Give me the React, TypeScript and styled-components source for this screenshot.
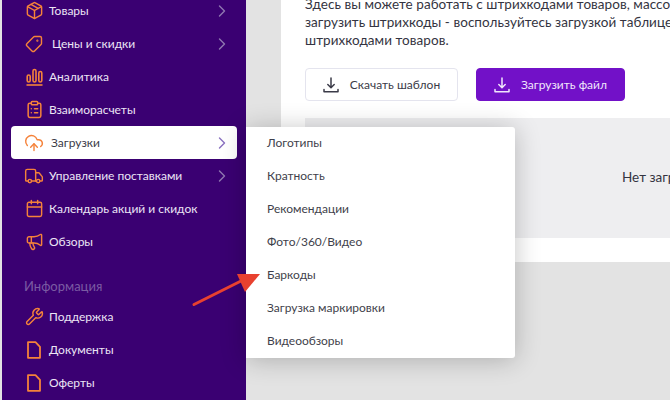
import React from 'react'
import styled, { createGlobalStyle } from 'styled-components'
import { Package, Tag, ClipboardList, CloudUpload, Truck, Calendar, Megaphone, Wrench, ChevronRight } from 'lucide-react'

const GlobalStyle = createGlobalStyle`
  html, body { margin: 0; padding: 0; background: #e3e3e3; }
  body { font-family: Lato, "Noto Sans", sans-serif; }
`

const Page = styled.div`
  position: relative;
  width: 670px;
  height: 400px;
  overflow: hidden;
  display: flex;
  padding-left: 2px;
  box-sizing: border-box;
  background: #e3e3e3;
`

const Sidebar = styled.nav`
  width: 244px;
  flex-shrink: 0;
  background: #3a0072;
  padding: 0 9px;
  box-sizing: border-box;
`

const NavList = styled.div`
  margin-top: -6px;
`

const NavItem = styled.div<{ $active?: boolean }>`
  height: 33px;
  display: flex;
  align-items: center;
  padding: 0 5px 0 12px;
  border-radius: 4px;
  font-size: 12px;
  color: ${p => (p.$active ? '#3b3b48' : '#ece5f5')};
  background: ${p => (p.$active ? '#ffffff' : 'transparent')};
  box-sizing: border-box;
`

const IconSlot = styled.span`
  width: 22px;
  display: flex;
  justify-content: center;
  color: #f5823a;
  flex-shrink: 0;
`

const NavLabel = styled.span<{ $shift?: number }>`
  margin-left: ${p => p.$shift ?? 4}px;
  flex: 1;
  white-space: nowrap;
`

const Chevron = styled(ChevronRight)<{ $active?: boolean }>`
  color: ${p => (p.$active ? '#8a72c0' : '#8e75b0')};
`

const SectionTitle = styled.div`
  font-size: 13px;
  color: #7a5ba3;
  height: 28px;
  margin-top: 14px;
  padding-left: 13px;
  display: flex;
  align-items: center;
`

const Main = styled.main`
  flex: 1;
  min-width: 0;
  padding-left: 35px;
  overflow: hidden;
`

const Panel = styled.section`
  background: #fff;
  padding: 0 0 24px 24px;
  margin-top: -5px;
  color: #343441;
`

const Intro = styled.p`
  margin: 0;
  font-size: 13.5px;
  line-height: 18px;
  white-space: nowrap;
  letter-spacing: 0.05px;
`

const Actions = styled.div`
  display: flex;
  gap: 18px;
  margin-top: 19px;
`

const ActionButton = styled.button<{ $primary?: boolean }>`
  height: 33px;
  width: ${p => (p.$primary ? 149 : 153)}px;
  display: flex;
  align-items: center;
  justify-content: center;
  gap: 11px;
  border-radius: 4px;
  border: 1px solid ${p => (p.$primary ? '#7211c8' : '#e4e4ee')};
  background: ${p => (p.$primary ? '#7211c8' : '#fff')};
  color: ${p => (p.$primary ? '#f0e6fb' : '#3b3b48')};
  font: 12px Lato, "Noto Sans", sans-serif;
  padding: 0;
`

const EmptyBox = styled.div`
  margin-top: 17px;
  height: 118px;
  padding-bottom: 2px;
  background: #eeeef0;
  display: flex;
  align-items: center;
  padding-left: 317px;
  font-size: 13.5px;
  white-space: nowrap;
  overflow: hidden;
`

const Flyout = styled.div`
  position: absolute;
  left: 246px;
  top: 127px;
  width: 269px;
  background: #fff;
  border-radius: 0 3px 3px 0;
  box-shadow: 0 2px 26px rgba(0, 0, 0, 0.24);
`

const FlyoutItem = styled.div`
  height: 33px;
  display: flex;
  align-items: center;
  padding: 0 0 2px 21px;
  box-sizing: border-box;
  font-size: 12px;
  color: #3f3f4b;
`

const Pointer = styled.svg`
  position: absolute;
  left: 185px;
  top: 265px;
`

const Bars = () => (
  <svg width="17" height="18" viewBox="0 0 17 18" fill="none" stroke="currentColor" strokeWidth="1.6">
    <rect x="1.2" y="7" width="3" height="7" rx="1.5" />
    <rect x="7" y="1.5" width="3" height="12.5" rx="1.5" />
    <rect x="12.8" y="3.5" width="3" height="10.5" rx="1.5" />
    <path d="M0.5 17h16" />
  </svg>
)

const Doc = () => (
  <svg width="14" height="18" viewBox="0 0 14 18" fill="none" stroke="currentColor" strokeWidth="1.8" strokeLinejoin="round">
    <path d="M1 1.2h7.5L13 5.8v11H1z" />
  </svg>
)

const Tray = () => (
  <svg width="16" height="16" viewBox="0 0 16 16" fill="none" stroke="currentColor" strokeWidth="1.5" strokeLinecap="round" strokeLinejoin="round">
    <path d="M8 1v9.5M4.8 7.5 8 10.7l3.2-3.2" />
    <path d="M1 12.5v2.3h14v-2.3" />
  </svg>
)

const mainNav = [
  { icon: <Package size={19} strokeWidth={1.8} />, label: 'Товары', more: true },
  { icon: <Tag size={18} strokeWidth={1.9} style={{ transform: 'scaleX(-1)' }} />, label: 'Цены и скидки', more: true, shift: 7 },
  { icon: <Bars />, label: 'Аналитика' },
  { icon: <ClipboardList size={19} strokeWidth={1.9} />, label: 'Взаиморасчеты' },
  { icon: <CloudUpload size={20} strokeWidth={1.7} />, label: 'Загрузки', more: true, active: true, shift: 6 },
  { icon: <Truck size={20} strokeWidth={1.7} />, label: 'Управление поставками', more: true },
  { icon: <Calendar size={19} strokeWidth={1.8} />, label: 'Календарь акций и скидок' },
  { icon: <Megaphone size={19} strokeWidth={1.8} />, label: 'Обзоры' },
]

const infoNav = [
  { icon: <Wrench size={19} strokeWidth={1.8} />, label: 'Поддержка' },
  { icon: <Doc />, label: 'Документы' },
  { icon: <Doc />, label: 'Оферты' },
]

const uploads = ['Логотипы', 'Кратность', 'Рекомендации', 'Фото/360/Видео', 'Баркоды', 'Загрузка маркировки', 'Видеообзоры']

type Item = { icon: React.ReactNode; label: string; more?: boolean; active?: boolean; shift?: number }

const Row = ({ item }: { item: Item }) => (
  <NavItem $active={item.active}>
    <IconSlot>{item.icon}</IconSlot>
    <NavLabel $shift={item.shift}>{item.label}</NavLabel>
    {item.more && <Chevron size={20} strokeWidth={1.7} $active={item.active} />}
  </NavItem>
)

const App = () => (
  <Page>
    <GlobalStyle />
    <Sidebar>
      <NavList>
        {mainNav.map(item => <Row key={item.label} item={item} />)}
        <SectionTitle>Информация</SectionTitle>
        {infoNav.map(item => <Row key={item.label} item={item} />)}
      </NavList>
    </Sidebar>
    <Main>
      <Panel>
        <Intro>
          Здесь вы можете работать с штрихкодами товаров, массово<br />
          загрузить штрихкоды - воспользуйтесь загрузкой таблицей<br />
          штрихкодами товаров.
        </Intro>
        <Actions>
          <ActionButton><Tray />Скачать шаблон</ActionButton>
          <ActionButton $primary><Tray />Загрузить файл</ActionButton>
        </Actions>
        <EmptyBox>Нет загруженных файлов</EmptyBox>
      </Panel>
    </Main>
    <Flyout>
      {uploads.map(label => <FlyoutItem key={label}>{label}</FlyoutItem>)}
    </Flyout>
    <Pointer width="80" height="45" viewBox="0 0 80 45">
      <path d="M9 39.5 L58 15" stroke="#e8412f" strokeWidth="3" strokeLinecap="round" />
      <path d="M52 9 H75 L60 27 Z" fill="#e8412f" />
    </Pointer>
  </Page>
)

export default App
